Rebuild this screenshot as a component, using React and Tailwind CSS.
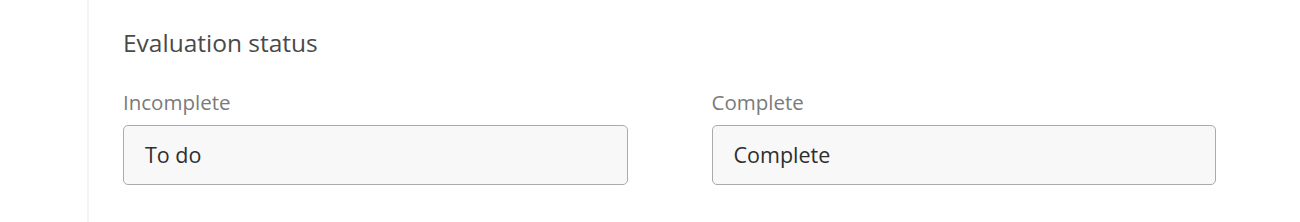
export default function App() {
  const fields = [
    { label: 'Incomplete', value: 'To do' },
    { label: 'Complete', value: 'Complete' },
  ]

  return (
    <div className="h-[222px] w-[1300px] bg-white flex" style={{ fontFamily: '"Open Sans", "Noto Sans", sans-serif' }}>
      <div className="w-[89px] shrink-0 border-r-2 border-[#f3f3f3]" />
      <div className="flex-1 pl-[34px] pr-[84px] pt-[28px]">
        <h2 className="text-[24.5px] leading-[30px] text-[#4a4a4a]">Evaluation status</h2>
        <div className="mt-[31px] grid grid-cols-2 gap-x-[84px]">
          {fields.map(f => (
            <div key={f.label}>
              <label className="block text-[20.5px] leading-[26px] text-[#7a7a7a]">{f.label}</label>
              <div className="mt-[10px] h-[60px] rounded-[5px] border border-[#ababab] bg-[#f8f8f8] flex items-center px-[21px] text-[21.5px] text-[#2e2e2e]">
                {f.value}
              </div>
            </div>
          ))}
        </div>
      </div>
    </div>
  )
}
